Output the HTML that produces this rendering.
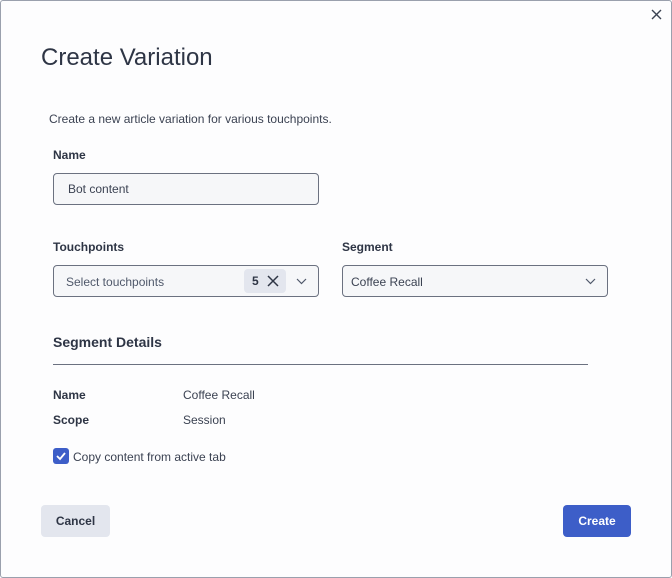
<!DOCTYPE html>
<html><head><style>
body{margin:0;width:672px;height:578px;background:#fdfdfe;font-family:"Liberation Sans",sans-serif;color:#2e3545;position:relative;overflow:hidden}
.frame{position:absolute;left:0;top:0;width:670px;height:576px;border:1px solid #9aa0ad;border-radius:3px;background:#fdfdfe}
.a{position:absolute;white-space:nowrap}
.lbl{font-size:12px;font-weight:bold;color:#2e3545}
.txt{font-size:12px;color:#3b4252}
.box{position:absolute;height:32px;border:1px solid #6b7180;border-radius:4px;background:#f6f7f9;box-sizing:border-box}
</style></head><body>
<div class="frame"></div>
<svg class="a" style="left:650px;top:8px" width="13" height="13" viewBox="0 0 13 13"><path d="M2 2L11 11M11 2L2 11" stroke="#3b4252" stroke-width="1.4"/></svg>
<div class="a" style="left:41px;top:44px;font-size:24px;color:#2e3545">Create Variation</div>
<div class="a txt" style="left:49px;top:112px">Create a new article variation for various touchpoints.</div>
<div class="a lbl" style="left:53px;top:148px">Name</div>
<div class="box" style="left:53px;top:173px;width:266px"></div>
<div class="a txt" style="left:68px;top:182px">Bot content</div>
<div class="a lbl" style="left:53px;top:240px">Touchpoints</div>
<div class="box" style="left:53px;top:265px;width:266px"></div>
<div class="a txt" style="left:66px;top:275px;color:#4f586a">Select touchpoints</div>
<div class="a" style="left:244px;top:269px;width:42px;height:24px;background:#e3e6ee;border-radius:4px"></div>
<div class="a" style="left:252px;top:274px;font-size:12px;font-weight:bold">5</div>
<svg class="a" style="left:267px;top:275px" width="12" height="12" viewBox="0 0 12 12"><path d="M1 1L11 11M11 1L1 11" stroke="#2e3545" stroke-width="1.5"/></svg>
<svg class="a" style="left:296px;top:278px" width="11" height="7" viewBox="0 0 11 7"><path d="M1 1L5.5 5.5L10 1" stroke="#4f586a" stroke-width="1.2" fill="none"/></svg>
<div class="a lbl" style="left:342px;top:240px">Segment</div>
<div class="box" style="left:342px;top:265px;width:266px"></div>
<div class="a txt" style="left:351px;top:275px">Coffee Recall</div>
<svg class="a" style="left:585px;top:278px" width="11" height="7" viewBox="0 0 11 7"><path d="M1 1L5.5 5.5L10 1" stroke="#4f586a" stroke-width="1.2" fill="none"/></svg>
<div class="a" style="left:53px;top:334px;font-size:14px;font-weight:bold">Segment Details</div>
<div class="a" style="left:53px;top:364px;width:535px;height:1px;background:#6b7180"></div>
<div class="a lbl" style="left:53px;top:388px">Name</div>
<div class="a txt" style="left:183px;top:388px">Coffee Recall</div>
<div class="a lbl" style="left:53px;top:413px">Scope</div>
<div class="a txt" style="left:183px;top:413px">Session</div>
<div class="a" style="left:53px;top:448px;width:16px;height:16px;background:#3d5ec8;border-radius:3px"></div>
<svg class="a" style="left:55px;top:450px" width="12" height="12" viewBox="0 0 12 12"><path d="M2 6L5 9L10 3" stroke="#fff" stroke-width="1.8" fill="none"/></svg>
<div class="a txt" style="left:73px;top:450px">Copy content from active tab</div>
<div class="a" style="left:41px;top:505px;width:69px;height:32px;background:#e3e6ee;border-radius:4px;font-size:12px;font-weight:bold;text-align:center;line-height:32px">Cancel</div>
<div class="a" style="left:563px;top:505px;width:68px;height:32px;background:#3d5ec8;border-radius:4px;font-size:12px;font-weight:bold;color:#fff;text-align:center;line-height:32px">Create</div>
</body></html>
